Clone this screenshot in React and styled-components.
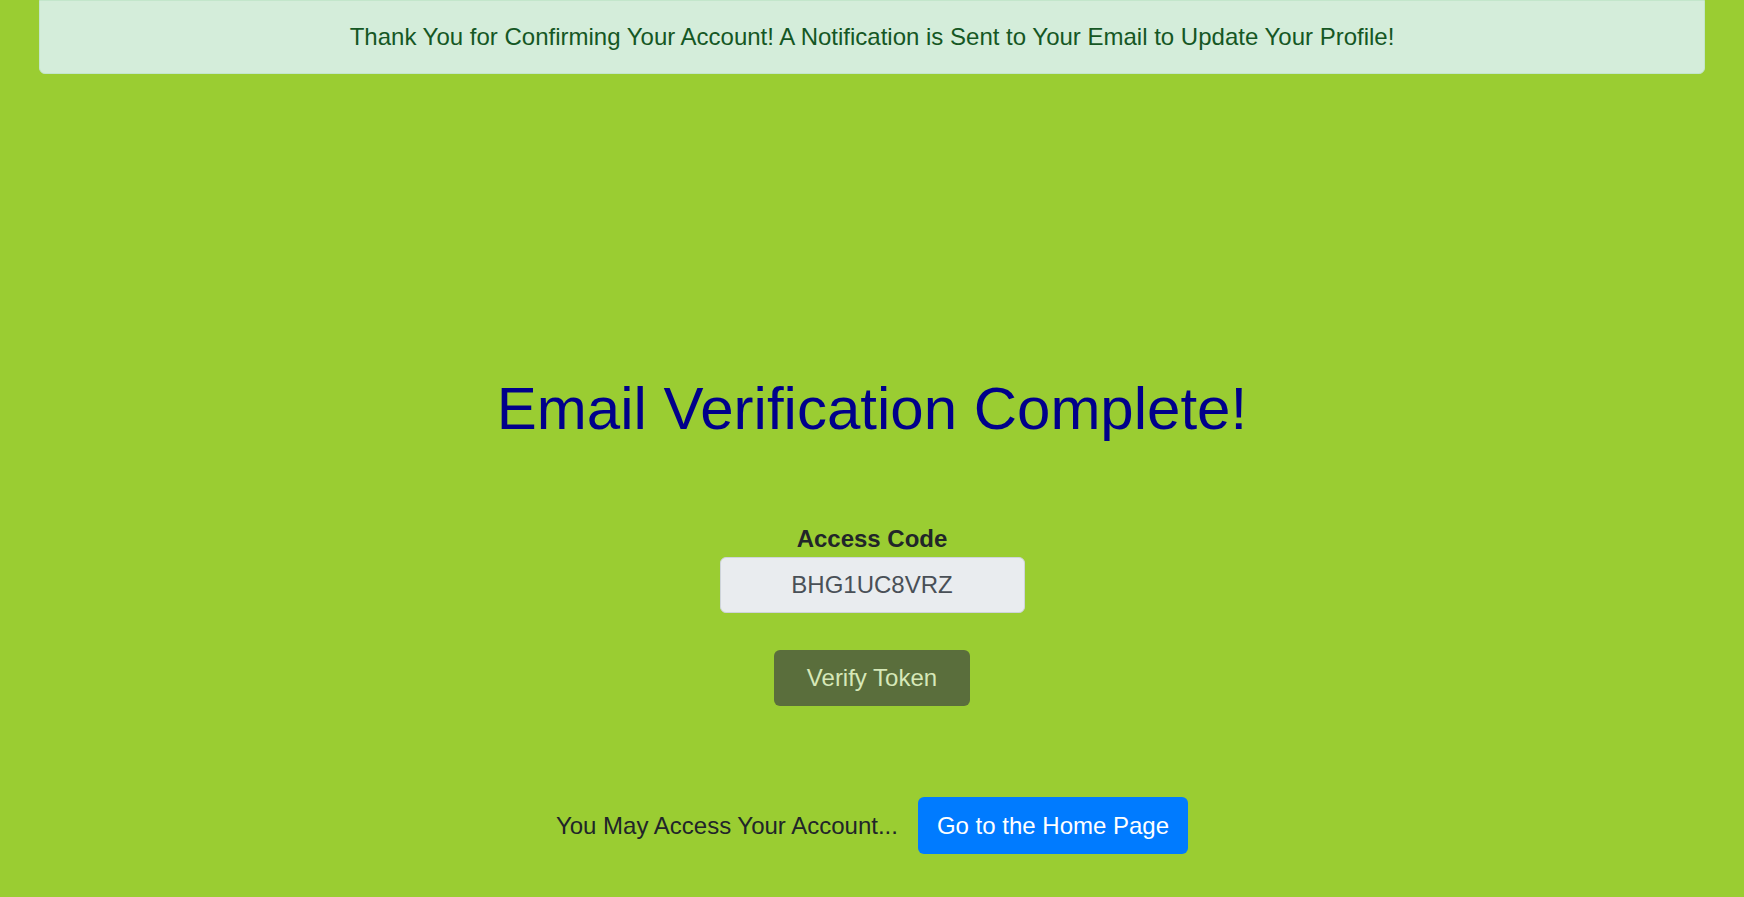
import React from 'react'
import styled, { createGlobalStyle } from 'styled-components'

const GlobalStyle = createGlobalStyle`
    html, body {
        margin: 0;
        padding: 0;
        background: #9acd32;
        font-family: "Liberation Sans", Arial, sans-serif;
    }
`;

const Page = styled.div`
    min-height: 100vh;
    display: flex;
    flex-direction: column;
    align-items: center;
`;

const Banner = styled.div`
    box-sizing: border-box;
    width: calc(100% - 78px);
    height: 74px;
    display: flex;
    align-items: center;
    justify-content: center;
    background: #d4edda;
    border: 1.5px solid #c3e6cb;
    border-radius: 0 0 6px 6px;
    color: #155724;
    font-size: 24px;
    line-height: 36px;
`;

const Title = styled.h1`
    margin: 299px 0 0;
    font-size: 60px;
    font-weight: 400;
    line-height: 72px;
    color: #00008b;
`;

const Form = styled.div`
    margin-top: 76px;
    display: flex;
    flex-direction: column;
    align-items: center;
`;

const Label = styled.label`
    font-size: 24px;
    line-height: 36px;
    font-weight: 700;
    color: #212529;
`;

const CodeInput = styled.input`
    box-sizing: border-box;
    width: 305px;
    height: 56px;
    padding: 0 18px;
    background: #e9ecef;
    border: 1.5px solid #ced4da;
    border-radius: 6px;
    color: #495057;
    font-family: inherit;
    font-size: 24px;
    text-align: center;
    outline: none;
`;

const Button = styled.button`
    box-sizing: border-box;
    height: ${p => p.$h}px;
    padding: 0 ${p => p.$px}px;
    border: none;
    border-radius: 6px;
    background: ${p => p.$bg};
    color: ${p => p.$fg};
    font-family: inherit;
    font-size: 24px;
    cursor: pointer;
`;

const VerifyButton = styled(Button)`
    margin-top: 37px;
`;

const Footer = styled.div`
    margin-top: 91px;
    display: flex;
    align-items: center;
    gap: 20px;
`;

const Note = styled.span`
    font-size: 24px;
    color: #212529;
`;

export default function App() {
    return (
        <Page>
            <GlobalStyle />
            <Banner>
                Thank You for Confirming Your Account! A Notification is Sent to Your Email to Update Your Profile!
            </Banner>
            <Title>Email Verification Complete!</Title>
            <Form>
                <Label htmlFor="code">Access Code</Label>
                <CodeInput id="code" value="BHG1UC8VRZ" readOnly />
                <VerifyButton $h={56} $px={33} $bg="#5a6e3c" $fg="#d6e8b8">Verify Token</VerifyButton>
            </Form>
            <Footer>
                <Note>You May Access Your Account...</Note>
                <Button $h={57} $px={19} $bg="#007bff" $fg="#ffffff">Go to the Home Page</Button>
            </Footer>
        </Page>
    )
}
